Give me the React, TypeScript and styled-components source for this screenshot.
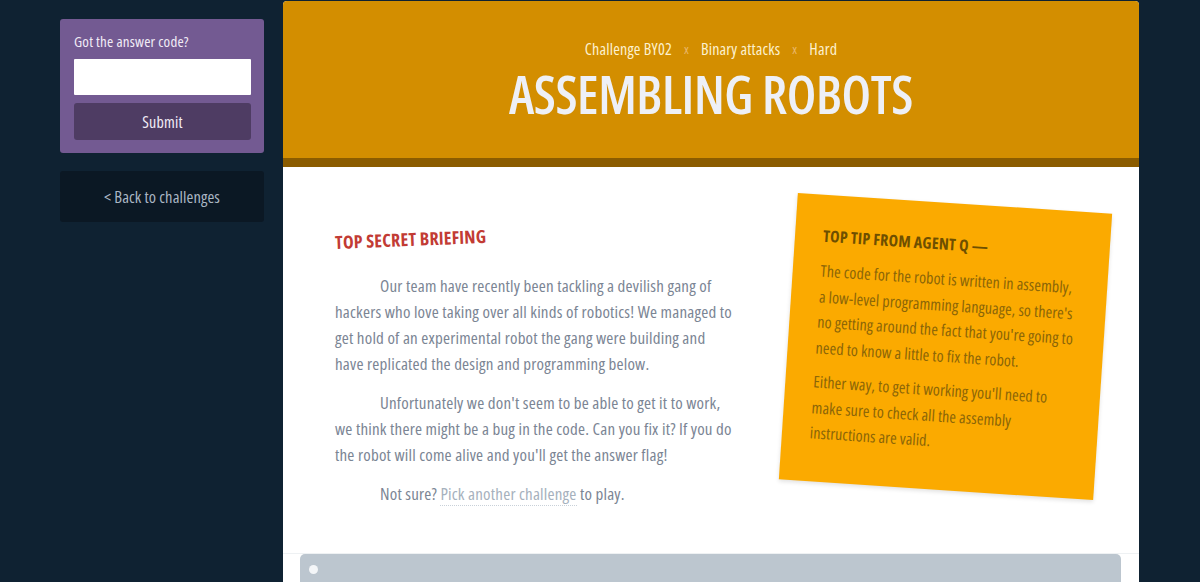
import React from "react";
import styled, { createGlobalStyle } from "styled-components";

const FONT = `"Open Sans", "Liberation Sans", sans-serif`;

const Global = createGlobalStyle`
  html, body { margin: 0; padding: 0; background: #0f2232; }
  body { font-family: ${FONT}; font-stretch: 75%; letter-spacing: 0.2px; overflow: hidden; }
  * { box-sizing: border-box; }
  button, input { font-family: inherit; font-stretch: inherit; letter-spacing: inherit; }
`;

const Page = styled.div`
  display: grid;
  grid-template-columns: 204px 856px;
  column-gap: 19px;
  padding: 0 61px 0 60px;
  height: 582px;
  overflow: hidden;
`;

const Sidebar = styled.aside`
  display: flex;
  flex-direction: column;
  gap: 18px;
  padding-top: 19px;
`;

const AnswerCard = styled.form`
  background: #735a92;
  border-radius: 3px;
  padding: 13px 13px 13px 14px;
  display: flex;
  flex-direction: column;
`;

const Label = styled.label`
  color: #f1ecf6;
  font-size: 15px;
  line-height: 18px;
  margin-bottom: 9px;
`;

const Input = styled.input`
  height: 36px;
  border: none;
  border-radius: 1px;
  background: #fff;
  margin-bottom: 8px;
`;

const SubmitButton = styled.button`
  height: 37px;
  border: none;
  border-radius: 3px;
  background: #4e3c63;
  color: #f1ecf6;
  font-size: 16px;
`;

const BackCard = styled.a`
  display: flex;
  align-items: center;
  justify-content: center;
  height: 51px;
  border-radius: 3px;
  background: #0b1824;
  color: #aab6c3;
  font-size: 16.5px;
  letter-spacing: 0.1px;
  text-decoration: none;
`;

const Main = styled.main`
  margin-top: 1px;
  background: #fff;
  border-radius: 4px 4px 0 0;
  overflow: hidden;
  display: flex;
  flex-direction: column;
`;

const Header = styled.header`
  flex-shrink: 0;
  background: #d38e00;
  height: 166px;
  border-bottom: 9px solid #8b5c00;
  display: flex;
  flex-direction: column;
  align-items: center;
  padding-top: 37px;
`;

const Meta = styled.div`
  display: flex;
  gap: 12px;
  align-items: center;
  color: #fdf1cf;
  font-size: 16px;
  line-height: 22px;
`;

const Sep = styled.span`
  color: #eab76a;
  font-size: 13px;
`;

const Title = styled.h1`
  margin: 4px 0 0;
  color: #eef0f6;
  font-size: 52px;
  font-weight: 600;
  line-height: 60px;
  letter-spacing: -0.4px;
`;

const Body = styled.section`
  flex-shrink: 0;
  display: flex;
  gap: 53px;
  padding: 0 36px 0 52px;
  height: 386px;
`;

const Briefing = styled.div`
  width: 402px;
  padding-top: 64px;
`;

const Heading = styled.h2`
  margin: 0 0 20px;
  color: #c23b34;
  font-size: 18px;
  font-weight: 700;
  line-height: 22px;
  transform: rotate(-2.3deg);
  transform-origin: left center;
`;

const Para = styled.p`
  margin: 0 0 13px;
  color: #7b8594;
  font-size: 17px;
  line-height: 26px;
  text-indent: 45px;
`;

const Link = styled.a`
  color: #a6b1bd;
  text-decoration: none;
  border-bottom: 1px dotted #c9d1d9;
`;

const Sticky = styled.aside`
  margin-top: 36px;
  width: 315px;
  height: 287px;
  background: #fbaa00;
  transform: rotate(3.8deg);
  box-shadow: 0 2px 4px rgba(0, 0, 0, 0.12);
  padding: 30px 29px 0 28px;
  flex-shrink: 0;
`;

const StickyTitle = styled.h3`
  margin: 0 0 12px;
  color: #6e4f00;
  font-size: 16px;
  font-weight: 700;
  line-height: 22px;
`;

const StickyText = styled.p`
  margin: 0 0 9px;
  color: #8a6508;
  font-size: 16px;
  letter-spacing: 0.1px;
  line-height: 25.5px;
`;

const Lower = styled.section`
  border-top: 1px solid #eef1f3;
  padding: 0 18px 0 17px;
  flex: 1;
`;

const CodeBar = styled.div`
  height: 40px;
  background: #bcc6cf;
  border-radius: 5px 5px 0 0;
  padding: 11px 0 0 9px;
`;

const Dot = styled.span`
  display: block;
  width: 9px;
  height: 9px;
  border-radius: 50%;
  background: #f4f6f8;
`;

export default function App() {
  return (
    <>
      <Global />
      <Page>
        <Sidebar>
          <AnswerCard onSubmit={(e) => e.preventDefault()}>
            <Label>Got the answer code?</Label>
            <Input type="text" />
            <SubmitButton type="submit">Submit</SubmitButton>
          </AnswerCard>
          <BackCard href="#">&lt; Back to challenges</BackCard>
        </Sidebar>
        <Main>
          <Header>
            <Meta>
              <span>Challenge BY02</span>
              <Sep>x</Sep>
              <span>Binary attacks</span>
              <Sep>x</Sep>
              <span>Hard</span>
            </Meta>
            <Title>ASSEMBLING ROBOTS</Title>
          </Header>
          <Body>
            <Briefing>
              <Heading>TOP SECRET BRIEFING</Heading>
              <Para>
                Our team have recently been tackling a devilish gang of hackers who love taking over all
                kinds of robotics! We managed to get hold of an experimental robot the gang were building
                and have replicated the design and programming below.
              </Para>
              <Para>
                Unfortunately we don't seem to be able to get it to work, we think there might be a bug in
                the code. Can you fix it? If you do the robot will come alive and you'll get the answer flag!
              </Para>
              <Para>
                Not sure? <Link href="#">Pick another challenge</Link> to play.
              </Para>
            </Briefing>
            <Sticky>
              <StickyTitle>TOP TIP FROM AGENT Q —</StickyTitle>
              <StickyText>
                The code for the robot is written in assembly, a low-level programming language, so there's
                no getting around the fact that you're going to need to know a little to fix the robot.
              </StickyText>
              <StickyText>
                Either way, to get it working you'll need to make sure to check all the assembly
                instructions are valid.
              </StickyText>
            </Sticky>
          </Body>
          <Lower>
            <CodeBar>
              <Dot />
            </CodeBar>
          </Lower>
        </Main>
      </Page>
    </>
  );
}
